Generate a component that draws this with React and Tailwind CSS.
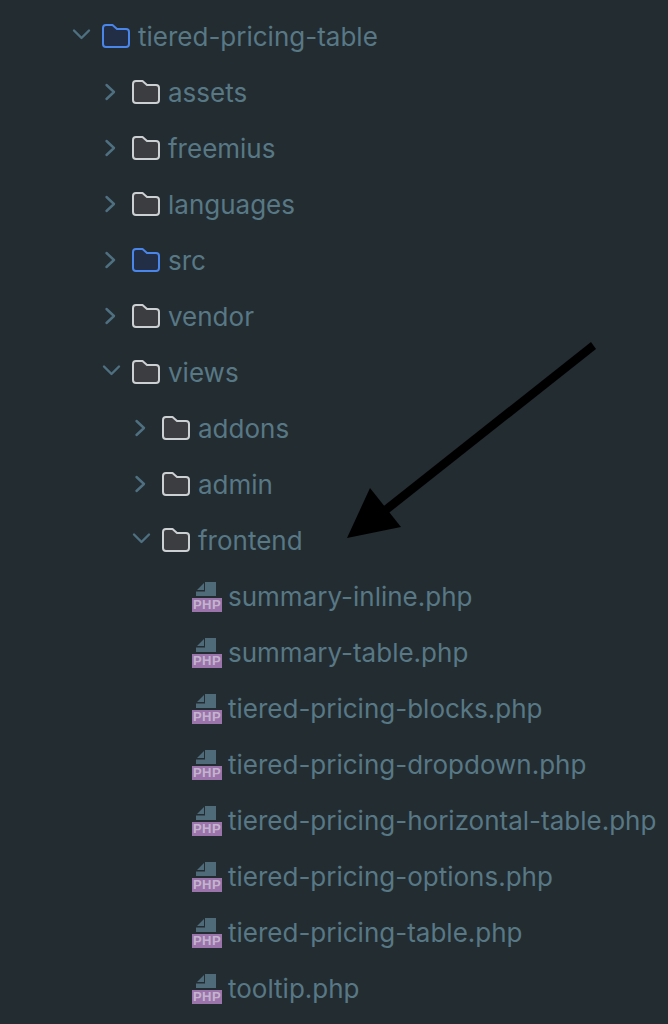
function Chevron({ open }) {
  return (
    <svg width="24" height="24" viewBox="0 0 24 24" fill="none" stroke="#4f7080" strokeWidth="2.4" strokeLinecap="round" strokeLinejoin="round">
      {open ? <path d="M4 6.5 11.5 14 19 6.5" /> : <path d="M6.5 5 14 12 6.5 19" />}
    </svg>
  );
}

function Folder({ blue }) {
  return (
    <svg width="30" height="26" viewBox="0 0 30 26" fill={blue ? "#212e46" : "#3c3d40"} stroke={blue ? "#4a85ea" : "#ccd0d2"} strokeWidth="2" strokeLinejoin="round">
      <path d="M5 2h6.5l4.5 4h9a3 3 0 0 1 3 3v12a3 3 0 0 1-3 3H5a3 3 0 0 1-3-3V5a3 3 0 0 1 3-3Z" />
    </svg>
  );
}

function PhpIcon() {
  return (
    <div className="relative w-[30px] h-[30px] shrink-0 mt-[2px]">
      <svg className="absolute left-0 top-0" width="30" height="15" viewBox="0 0 30 15" fill="#4f6a78">
        <path d="M13 0h11v14H4V9.5h9z" />
        <path d="M5 8h7V1z" />
      </svg>
      <div className="absolute left-0 bottom-0 w-[30px] h-[14px] bg-[#9a74ab] text-[#c4b3ce] text-[13px] leading-[14px] font-bold text-center tracking-[0.5px] font-['Liberation_Sans',sans-serif]">
        PHP
      </div>
    </div>
  );
}

function FolderRow({ name, depth, open, blue }) {
  const pad = { 0: "pl-[70px]", 1: "pl-[100px]", 2: "pl-[130px]" };
  return (
    <div className={`flex items-center h-14 ${pad[depth]}`}>
      <div className="w-6 h-6 shrink-0">
        <Chevron open={open} />
      </div>
      <div className="ml-[7px] mr-[7px] w-[30px] h-[26px] shrink-0">
        <Folder blue={blue} />
      </div>
      <span>{name}</span>
    </div>
  );
}

function FileRow({ name }) {
  return (
    <div className="flex items-center h-14 pl-[192px] gap-[6px]">
      <PhpIcon />
      <span>{name}</span>
    </div>
  );
}

const folders = [
  { name: "tiered-pricing-table", depth: 0, open: true, blue: true },
  { name: "assets", depth: 1 },
  { name: "freemius", depth: 1 },
  { name: "languages", depth: 1 },
  { name: "src", depth: 1, blue: true },
  { name: "vendor", depth: 1 },
  { name: "views", depth: 1, open: true },
  { name: "addons", depth: 2 },
  { name: "admin", depth: 2 },
  { name: "frontend", depth: 2, open: true },
];

const files = [
  "summary-inline.php",
  "summary-table.php",
  "tiered-pricing-blocks.php",
  "tiered-pricing-dropdown.php",
  "tiered-pricing-horizontal-table.php",
  "tiered-pricing-options.php",
  "tiered-pricing-table.php",
  "tooltip.php",
];

export default function App() {
  return (
    <div className="relative w-[668px] h-[1024px] overflow-hidden bg-[#232c31] pt-[8px] text-[#587885] text-[26px] font-['Inter',sans-serif] whitespace-nowrap">
      {folders.map((f) => (
        <FolderRow key={f.name} {...f} />
      ))}
      {files.map((f) => (
        <FileRow key={f} name={f} />
      ))}
      {/* arrow drawn over the tree */}
      <svg className="absolute left-0 top-0" width="668" height="1024" viewBox="0 0 668 1024" fill="#000">
        <path d="M591 342 596 349 385 516 380 509Z" />
        <path d="M347 538 370 488 401 527Z" />
      </svg>
    </div>
  );
}
